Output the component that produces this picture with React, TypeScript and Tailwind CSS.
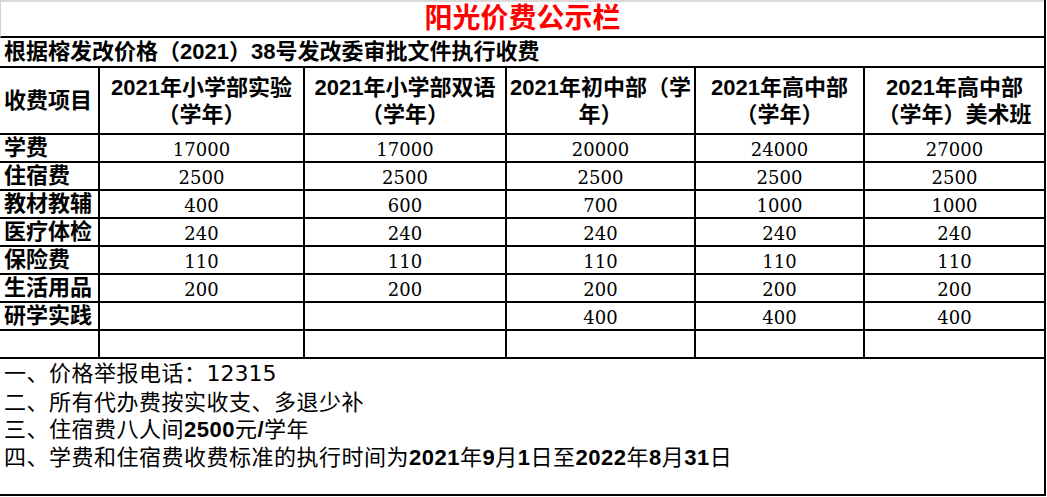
const SANS = "font-['Liberation_Sans','Noto_Sans_CJK_SC',sans-serif]";
const NUM = "font-['Liberation_Sans',sans-serif] font-bold";

const colW = ["w-[100px]", "w-[205px]", "w-[202px]", "w-[189px]", "w-[169px]", "flex-1"];

const headers: string[][] = [
  ["2021年小学部实验", "（学年）"],
  ["2021年小学部双语", "（学年）"],
  ["2021年初中部（学", "年）"],
  ["2021年高中部", "（学年）"],
  ["2021年高中部", "（学年）美术班"],
];

const rows: { label: string; values: string[] }[] = [
  { label: "学费", values: ["17000", "17000", "20000", "24000", "27000"] },
  { label: "住宿费", values: ["2500", "2500", "2500", "2500", "2500"] },
  { label: "教材教辅", values: ["400", "600", "700", "1000", "1000"] },
  { label: "医疗体检", values: ["240", "240", "240", "240", "240"] },
  { label: "保险费", values: ["110", "110", "110", "110", "110"] },
  { label: "生活用品", values: ["200", "200", "200", "200", "200"] },
  { label: "研学实践", values: ["", "", "400", "400", "400"] },
  { label: "", values: ["", "", "", "", ""] },
];

function cellClass(i: number) {
  return `${colW[i]} shrink-0 ${i < 5 ? "border-r-2 border-black" : ""}`;
}

function NoteLine({ children }: { children: React.ReactNode }) {
  return (
    <div className="flex h-[28px] items-center whitespace-nowrap pb-[2px]">
      <span className="leading-[24px]">{children}</span>
    </div>
  );
}

export default function App() {
  return (
    <div className="h-[497px] w-[1047px] overflow-hidden bg-white text-black">
      <div className="w-[1046px] border-r-2 border-black">
        {/* title */}
        <div className="flex h-[38px] items-center justify-center border-t-2 border-b-2 border-l border-t-[#d9d9d9] border-b-black border-l-[#d4d4d4]">
          <span className={`${SANS} text-[28px] font-bold leading-none text-[#ff0000]`}>阳光价费公示栏</span>
        </div>

        {/* subtitle */}
        <div className={`${SANS} flex h-[30px] items-center border-b-2 border-black pl-1 text-[22px] font-bold leading-none`}>
          根据榕发改价格（2021）38号发改委审批文件执行收费
        </div>

        {/* header */}
        <div className={`${SANS} flex h-[67px] border-b-2 border-black text-[22px] font-bold`}>
          <div className={`${cellClass(0)} flex items-center pl-1 leading-none`}>收费项目</div>
          {headers.map((h, i) => (
            <div
              key={i}
              className={`${cellClass(i + 1)} flex flex-col items-center justify-center whitespace-nowrap leading-[27px]`}
            >
              <span>{h[0]}</span>
              <span>{h[1]}</span>
            </div>
          ))}
        </div>

        {/* data rows */}
        {rows.map((r, ri) => (
          <div key={ri} className="flex h-[28px] border-b-2 border-black">
            <div className={`${cellClass(0)} ${SANS} flex items-center pl-1 text-[22px] font-bold leading-none`}>
              {r.label}
            </div>
            {r.values.map((v, i) => (
              <div
                key={i}
                className={`${cellClass(i + 1)} flex items-center justify-center pt-[3px] font-['DejaVu_Serif',serif] text-[18px] leading-none`}
              >
                {v}
              </div>
            ))}
          </div>
        ))}

        {/* notes */}
        <div className="h-[137px] border-b-2 border-black pl-1 font-['Noto_Sans_CJK_SC',sans-serif] text-[22px] tracking-[0.5px]">
          <NoteLine>
            一、价格举报电话：<span className="font-['DejaVu_Sans',sans-serif] tracking-normal">12315</span>
          </NoteLine>
          <NoteLine>二、所有代办费按实收支、多退少补</NoteLine>
          <NoteLine>
            三、住宿费八人间<span className={NUM}>2500</span>元<span className={NUM}>/</span>学年
          </NoteLine>
          <NoteLine>
            四、学费和住宿费收费标准的执行时间为<span className={NUM}>2021</span>年<span className={NUM}>9</span>月
            <span className={NUM}>1</span>日至<span className={NUM}>2022</span>年<span className={NUM}>8</span>月
            <span className={NUM}>31</span>日
          </NoteLine>
        </div>
      </div>
    </div>
  );
}
